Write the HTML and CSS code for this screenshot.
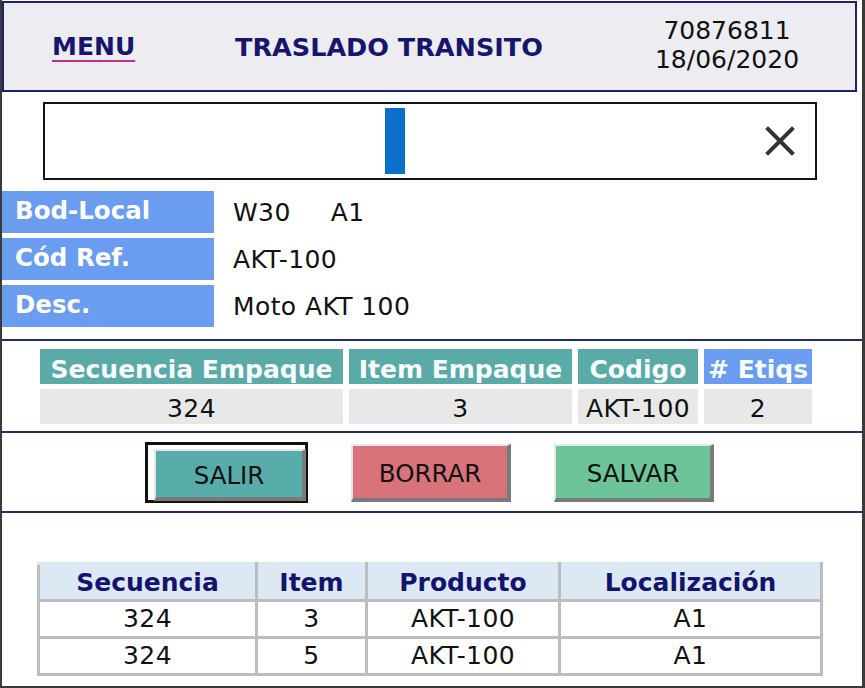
FILE: index.html
```html
<!DOCTYPE html>
<html lang="es">
<head>
<meta charset="utf-8">
<title>Traslado Transito</title>
<link rel="stylesheet" href="styles.css">
</head>
<body>
<div class="screen">
  <header class="topbar">
    <a class="menu">MENU</a>
    <h1 class="title">TRASLADO TRANSITO</h1>
    <div class="meta">
      <div>70876811</div>
      <div>18/06/2020</div>
    </div>
  </header>

  <div class="search">
    <div class="search-field"><span class="caret"></span></div>
    <svg class="clear" width="30" height="30" viewBox="0 0 30 30"><path d="M3 3 L27 27 M27 3 L3 27" stroke="#333" stroke-width="4" stroke-linecap="square" fill="none"/></svg>
  </div>

  <div class="info">
    <div class="info-row"><div class="label">Bod-Local</div><div class="value">W30<span class="loc">A1</span></div></div>
    <div class="info-row"><div class="label">Cód Ref.</div><div class="value">AKT-100</div></div>
    <div class="info-row"><div class="label">Desc.</div><div class="value">Moto AKT 100</div></div>
  </div>

  <div class="rule"></div>

  <div class="pack">
    <div class="ph">Secuencia Empaque</div>
    <div class="ph">Item Empaque</div>
    <div class="ph">Codigo</div>
    <div class="ph ph-blue">#&nbsp;Etiqs</div>
    <div class="pd">324</div>
    <div class="pd">3</div>
    <div class="pd">AKT-100</div>
    <div class="pd">2</div>
  </div>

  <div class="rule"></div>

  <div class="actions">
    <div class="focus"><button class="btn btn-teal">SALIR</button></div>
    <button class="btn btn-red">BORRAR</button>
    <button class="btn btn-green">SALVAR</button>
  </div>

  <div class="rule"></div>

  <table class="grid">
    <thead>
      <tr><th class="c1">Secuencia</th><th class="c2">Item</th><th class="c3">Producto</th><th class="c4">Localización</th></tr>
    </thead>
    <tbody>
      <tr><td>324</td><td>3</td><td>AKT-100</td><td>A1</td></tr>
      <tr><td>324</td><td>5</td><td>AKT-100</td><td>A1</td></tr>
    </tbody>
  </table>
</div>
</body>
</html>
```
FILE: styles.css
```css
* { box-sizing: border-box; }
html, body { margin: 0; padding: 0; background: #fff; }
body { font-family: "DejaVu Sans", Verdana, sans-serif; color: #111; }

.screen {
  width: 865px;
  height: 688px;
  border-left: 2px solid #3a3a3a;
  border-right: 3px solid #3a3a3a;
  border-bottom: 2px solid #3a3a3a;
  background: #fff;
  overflow: hidden;
}

.topbar {
  display: flex;
  align-items: center;
  height: 91px;
  margin: 1px 5px 0 0;
  border: 2px solid #1f2272;
  background: #ececf1;
}
.menu {
  margin-left: 48px;
  width: 183px;
  font-size: 25px;
  font-weight: bold;
  color: #16166e;
  text-decoration: underline;
  text-decoration-color: #c0308a;
  text-decoration-thickness: 2px;
  text-underline-offset: 5px;
}
.title {
  margin: 0;
  font-size: 25.5px;
  font-weight: bold;
  color: #16166e;
}
.meta {
  margin-left: auto;
  margin-right: 28px;
  width: 200px;
  text-align: center;
  font-size: 25px;
  line-height: 29px;
  color: #111;
  padding-bottom: 4px;
}

.search {
  display: flex;
  align-items: center;
  height: 78px;
  margin: 10px 45px 0 41px;
  border: 2px solid #151515;
}
.search-field {
  flex: 1;
  display: flex;
  align-items: center;
  padding-left: 340px;
}
.caret {
  display: block;
  width: 20px;
  height: 66px;
  background: #0a70c9;
}
.clear { margin-right: 20px; }

.info {
  display: flex;
  flex-direction: column;
  gap: 5px;
  margin-top: 11px;
}
.info-row { display: flex; align-items: center; height: 42px; }
.label {
  width: 212px;
  height: 42px;
  padding: 3px 0 0 13px;
  background: #6a9cf0;
  color: #fff;
  font-size: 24.5px;
  font-weight: bold;
  line-height: 34px;
}
.value {
  margin-left: 19px;
  font-size: 25px;
  letter-spacing: 0.4px;
  color: #111;
}
.loc { margin-left: 40px; }

.rule { height: 2px; background: #1f2a78; }
.info + .rule { margin-top: 12px; }

.pack {
  display: grid;
  grid-template-columns: 303px 223px 120px 108px;
  grid-template-rows: 35px 35px;
  column-gap: 6px;
  row-gap: 5px;
  margin: 8px 0 7px 38px;
}
.ph {
  background: #5aaaa8;
  color: #f7fcfc;
  font-size: 25px;
  font-weight: bold;
  text-align: center;
  line-height: 41px;
  white-space: nowrap;
  overflow: hidden;
}
.ph-blue { background: #6a9cf0; }
.pd {
  background: #e8e8e8;
  font-size: 25px;
  letter-spacing: 0.4px;
  text-align: center;
  line-height: 40px;
}

.actions {
  display: flex;
  align-items: flex-start;
  gap: 43px;
  height: 78px;
  padding: 9px 0 0 143px;
}
.btn {
  width: 160px;
  height: 58px;
  margin: 2px 0 0;
  padding: 2px 0 0;
  font-family: "DejaVu Sans", Verdana, sans-serif;
  font-size: 24.5px;
  color: #111;
  border-style: solid;
  border-width: 2px 4px 4px 2px;
  border-color: #e6e6e6 #7a7a7a #7a7a7a #e6e6e6;
  cursor: pointer;
}
.focus {
  width: 163px;
  height: 61px;
  border: 3px solid #111;
  padding: 4px 2px 2px 6px;
}
.focus .btn { width: 152px; height: 52px; margin: 0; }
.btn-teal { background: #58adaa; }
.btn-red { background: #d8737a; }
.btn-green { background: #6dc49b; }

.grid {
  margin: 49px 0 0 35px;
  border-collapse: collapse;
  font-size: 25px;
}
.grid th, .grid td {
  border: 3px solid #bdbdbd;
  text-align: center;
  padding: 0;
}
.grid th {
  height: 37px;
  background: #dde8f5;
  color: #141470;
  font-weight: bold;
  font-size: 25px;
  border-top-color: #dde8f5;
  border-left-color: #dde8f5;
}
.grid th:first-child { border-left-color: #bdbdbd; }
.grid td { height: 37px; color: #111; letter-spacing: 0.4px; line-height: 32px; }
.c1 { width: 218px; }
.c2 { width: 110px; }
.c3 { width: 193px; }
.c4 { width: 262px; }
```
